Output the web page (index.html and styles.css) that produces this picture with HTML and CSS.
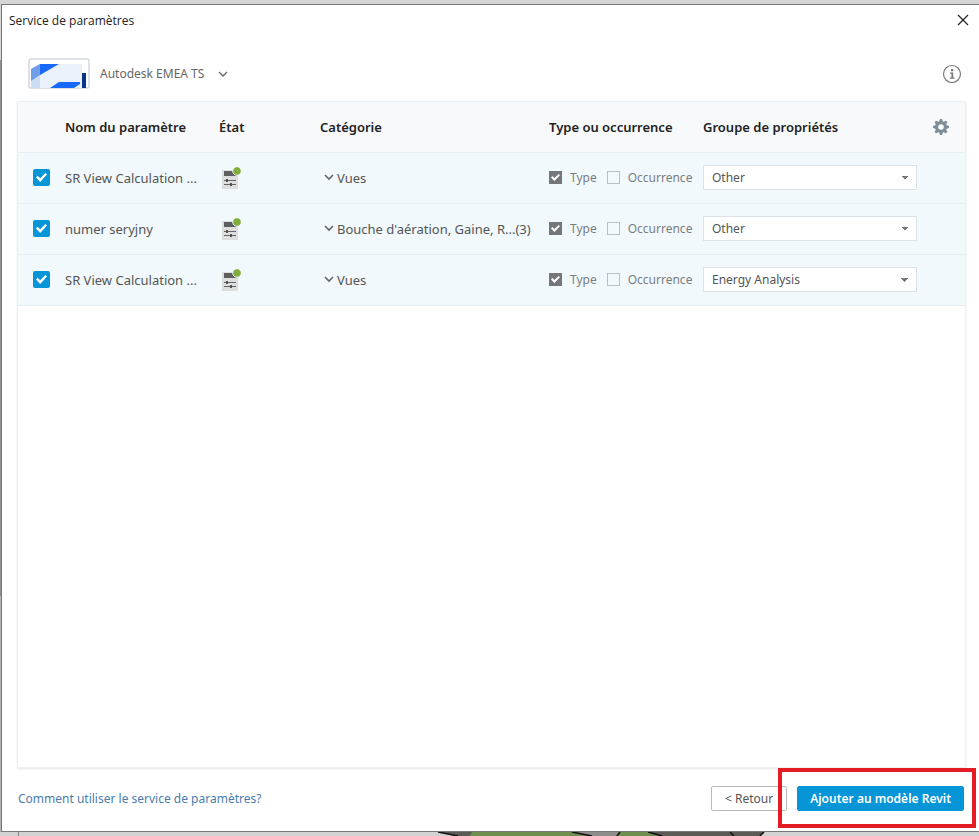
FILE: index.html
```html
<!DOCTYPE html>
<html lang="fr">

<head>
    <meta charset="UTF-8">
    <title>Service de paramètres</title>
    <link rel="stylesheet" href="styles.css">
</head>

<body>
    <div class="dialog">
        <header class="titlebar">
            <h1>Service de paramètres</h1>
            <button type="button" class="icon-btn" aria-label="Fermer">
                <svg width="12" height="12" viewBox="0 0 12 12"><path d="M1 1l10 10M11 1L1 11" stroke="#222" stroke-width="1.2" fill="none"/></svg>
            </button>
        </header>

        <div class="account-bar">
            <button type="button" class="account">
                <svg class="logo" width="62" height="31" viewBox="0 0 62 31">
                    <rect x="1" y="1" width="60" height="29" rx="2" fill="#fff" stroke="#d3d8df" stroke-width="1.5"/>
                    <path d="M12 6h42v24H12z" fill="#eaf1fb"/>
                    <path d="M3 11l9-5v24H3z" fill="#cddcf5"/>
                    <path d="M3 11l9-5v11l-9 6z" fill="#6f9fe8"/>
                    <path d="M12 6h19L12 17z" fill="#1769fa"/>
                    <path d="M31 24h21v2l-6 4H22z" fill="#1769fa"/>
                    <path d="M54 15h4v15h-4z" fill="#0b3489"/>
                </svg>
                <span>Autodesk EMEA TS</span>
                <svg class="account-arrow" width="10" height="6" viewBox="0 0 10 6"><path d="M1 1l4 4 4-4" stroke="#666" stroke-width="1.3" fill="none"/></svg>
            </button>
            <button type="button" class="icon-btn" aria-label="Informations">
                <svg width="20" height="20" viewBox="0 0 20 20">
                    <circle cx="10" cy="10" r="8.5" stroke="#777" stroke-width="1.2" fill="none"/>
                    <path d="M9 5h2.200v2.200H9zM8 8.500h3.200v5H12.500v1.200H7.800v-1.200h1.600v-3.800H8z" fill="#777"/>
                </svg>
            </button>
        </div>

        <main class="panel">
            <table class="params">
                <colgroup>
                    <col class="col-check">
                    <col class="col-name">
                    <col class="col-state">
                    <col class="col-category">
                    <col class="col-type">
                    <col class="col-group">
                    <col class="col-gear">
                </colgroup>
                <thead>
                    <tr>
                        <td></td>
                        <th>Nom du paramètre</th>
                        <th>État</th>
                        <th>Catégorie</th>
                        <th>Type ou occurrence</th>
                        <th>Groupe de propriétés</th>
                        <td>
                            <button type="button" class="icon-btn" aria-label="Paramètres du tableau">
                                <svg width="18" height="18" viewBox="0 0 18 18">
                                    <g fill="#7e8d96">
                                        <path id="tooth" d="M7 4L8 1h2l1 3v10l-1 3H8l-1-3z"/>
                                        <use href="#tooth" transform="rotate(45 9 9)"/>
                                        <use href="#tooth" transform="rotate(90 9 9)"/>
                                        <use href="#tooth" transform="rotate(135 9 9)"/>
                                        <circle cx="9" cy="9" r="5.800"/>
                                    </g>
                                    <circle cx="9" cy="9" r="2.800" fill="#f7f9fb"/>
                                </svg>
                            </button>
                        </td>
                    </tr>
                </thead>
                <tbody>
                    <tr>
                        <td><input type="checkbox" class="row-check" aria-label="Sélectionner la ligne 1" checked></td>
                        <td>SR View Calculation ...</td>
                        <td>
                            <svg class="state" width="22" height="24" viewBox="0 0 22 24">
                                <g id="state-icon">
                                    <path d="M3 4h16v19H3z" fill="#dedede"/>
                                    <path d="M5 5h13v5H5z" fill="#5d5f61"/>
                                    <path d="M5 14.500h12M5 18.500h12" stroke="#666" stroke-width="1.200"/>
                                    <path d="M8 13v3M12 17v3" stroke="#555" stroke-width="2"/>
                                    <circle cx="18" cy="5" r="4.300" fill="#7fae3d" stroke="#f1f9fc"/>
                                </g>
                            </svg>
                        </td>
                        <td>
                            <button type="button" class="category">
                                <svg width="10" height="7" viewBox="0 0 10 7"><path d="M1 1l4 4 4-4" stroke="#666" stroke-width="1.600" fill="none"/></svg>
                                <span>Vues</span>
                            </button>
                        </td>
                        <td>
                            <div class="kind">
                                <label><input type="checkbox" checked> Type</label>
                                <label><input type="checkbox"> Occurrence</label>
                            </div>
                        </td>
                        <td>
                            <select aria-label="Groupe de propriétés 1">
                                <option selected>Other</option>
                                <option>Energy Analysis</option>
                            </select>
                        </td>
                        <td></td>
                    </tr>
                    <tr>
                        <td><input type="checkbox" class="row-check" aria-label="Sélectionner la ligne 2" checked></td>
                        <td>numer seryjny</td>
                        <td><svg class="state" width="22" height="24" viewBox="0 0 22 24"><use href="#state-icon"/></svg></td>
                        <td>
                            <button type="button" class="category">
                                <svg width="10" height="7" viewBox="0 0 10 7"><path d="M1 1l4 4 4-4" stroke="#666" stroke-width="1.600" fill="none"/></svg>
                                <span>Bouche d'aération, Gaine, R...(3)</span>
                            </button>
                        </td>
                        <td>
                            <div class="kind">
                                <label><input type="checkbox" checked> Type</label>
                                <label><input type="checkbox"> Occurrence</label>
                            </div>
                        </td>
                        <td>
                            <select aria-label="Groupe de propriétés 2">
                                <option selected>Other</option>
                                <option>Energy Analysis</option>
                            </select>
                        </td>
                        <td></td>
                    </tr>
                    <tr>
                        <td><input type="checkbox" class="row-check" aria-label="Sélectionner la ligne 3" checked></td>
                        <td>SR View Calculation ...</td>
                        <td><svg class="state" width="22" height="24" viewBox="0 0 22 24"><use href="#state-icon"/></svg></td>
                        <td>
                            <button type="button" class="category">
                                <svg width="10" height="7" viewBox="0 0 10 7"><path d="M1 1l4 4 4-4" stroke="#666" stroke-width="1.600" fill="none"/></svg>
                                <span>Vues</span>
                            </button>
                        </td>
                        <td>
                            <div class="kind">
                                <label><input type="checkbox" checked> Type</label>
                                <label><input type="checkbox"> Occurrence</label>
                            </div>
                        </td>
                        <td>
                            <select aria-label="Groupe de propriétés 3">
                                <option>Other</option>
                                <option selected>Energy Analysis</option>
                            </select>
                        </td>
                        <td></td>
                    </tr>
                </tbody>
            </table>
        </main>

        <footer class="footer">
            <a href="#">Comment utiliser le service de paramètres?</a>
            <div class="actions">
                <button type="button" class="btn">&lt; Retour</button>
                <div class="highlighted">
                    <button type="button" class="btn btn-primary">Ajouter au modèle Revit</button>
                </div>
            </div>
        </footer>
    </div>

    <!-- strip of the model view under the dialog -->
    <svg class="model-view" viewBox="0 0 979 4" preserveAspectRatio="none">
        <path d="M0 0h979v4H0z" fill="#d2d2d2"/>
        <path d="M18 0h1v4h-1z" fill="#888"/>
        <path d="M438 0h326l-4 4H458z" fill="#5b5a55"/>
        <path d="M472 0h102l18 4H470z" fill="#6f8f4e"/>
        <path d="M574 0h46l-3 4h-25z" fill="#8d8c88"/>
        <path d="M620 0h28l14 4h-45z" fill="#6f8f4e"/>
        <path d="M438 0l20 4M572 0l20 4M620 0l-3 4M648 0l14 4M730 0l4 4M764 0l-4 4" stroke="#111" stroke-width="1.500"/>
    </svg>
</body>

</html>
```

FILE: styles.css
```css
* {
    box-sizing: border-box;
}

body {
    display: flex;
    flex-direction: column;
    min-height: 100vh;
    margin: 0;
    padding-top: 4px;
    background: linear-gradient(#d6d6d6 60px, #8f8f8f 60px, #8f8f8f 596px, #b5b5b5 596px);
    font-family: "Noto Sans", sans-serif;
    font-size: 13px;
    color: #555;
}

button,
select {
    font: inherit;
    color: inherit;
}

.dialog {
    flex: 1;
    display: flex;
    flex-direction: column;
    margin-left: 1px;
    padding: 0 13px 0 15px;
    border: 1px solid #777;
    border-right: none;
    background: #fff;
}

.titlebar {
    display: flex;
    justify-content: space-between;
    align-items: center;
    height: 30px;
    margin: 0 -3px 0 -8px;
}

h1 {
    margin: 0;
    font-family: "Open Sans", sans-serif;
    font-size: 12px;
    font-weight: normal;
    color: #222;
}

.icon-btn {
    display: flex;
    padding: 0;
    border: none;
    background: none;
    cursor: pointer;
}

.account-bar {
    display: flex;
    justify-content: space-between;
    align-items: center;
    height: 66px;
    padding: 11px 4px 0 11px;
}

.account {
    display: flex;
    align-items: center;
    gap: 10px;
    padding: 0;
    border: none;
    background: none;
    font-size: 12px;
    color: #666;
}

.account-arrow {
    margin-left: 4px;
}

.panel {
    flex: 1;
    border: 1px solid #edf0f2;
    box-shadow: 0 1px 2px rgba(0, 0, 0, 0.1);
}

.params {
    width: 100%;
    border-collapse: collapse;
    table-layout: fixed;
}

.params th,
.params td {
    height: 51px;
    padding: 0;
    text-align: left;
    white-space: nowrap;
    border-bottom: 1px solid #e6eef2;
}

.params thead th,
.params thead td {
    height: 50px;
}

.params th {
    font-weight: 600;
    color: #222;
}

.params thead {
    background: #f7f9fb;
}

.params tbody {
    background: #f1f9fc;
}

.col-check {
    width: 47px;
}

.col-name,
.col-type {
    width: 154px;
}

.col-state {
    width: 101px;
}

.col-group {
    width: 229px;
}

.col-gear {
    width: 33px;
}

.state {
    display: block;
}

input[type="checkbox"] {
    appearance: none;
    display: grid;
    place-items: center;
    width: 13px;
    height: 13px;
    margin: 0;
    border: 1px solid #b9c0c4;
}

input[type="checkbox"]:checked {
    border: none;
    background: #75787b;
}

/* tick mark */
input[type="checkbox"]:checked::before {
    content: "";
    width: 9px;
    height: 7px;
    background: #fff;
    clip-path: polygon(0 50%, 15% 30%, 38% 58%, 85% 0, 100% 18%, 38% 100%);
}

input.row-check {
    width: 17px;
    height: 17px;
    margin-left: 15px;
    border-radius: 2px;
}

input.row-check:checked {
    background: #0696d7;
}

input.row-check:checked::before {
    width: 11px;
    height: 9px;
}

.category {
    display: flex;
    align-items: center;
    gap: 3px;
    padding: 0 0 0 4px;
    border: none;
    background: none;
}

.kind {
    display: flex;
    gap: 10px;
    font-size: 12px;
    color: #7a7d80;
}

.kind label {
    display: flex;
    align-items: center;
    gap: 8px;
}

select {
    appearance: none;
    display: block;
    width: 214px;
    height: 25px;
    padding: 0 8px;
    border: 1px solid #dce3e6;
    border-radius: 0;
    background: linear-gradient(to bottom left, #777 50%, transparent 50%) right 11px center / 4px 4px no-repeat,
        linear-gradient(to bottom right, #777 50%, transparent 50%) right 7px center / 4px 4px no-repeat,
        #fff;
    font-size: 12px;
}

.footer {
    display: flex;
    justify-content: space-between;
    align-items: center;
    height: 63px;
    padding: 0 2px 2px 1px;
    font-size: 12px;
}

.footer a {
    color: #4a7dad;
    text-decoration: none;
}

.actions {
    display: flex;
    gap: 10px;
}

.btn {
    height: 25px;
    padding: 0 13px;
    border: 1px solid #bbb;
    border-radius: 2px;
    background: #fff;
    cursor: pointer;
}

.btn-primary {
    padding: 0 12px;
    border-color: #0696d7;
    background: #0696d7;
    color: #fff;
    font-weight: 600;
}

.highlighted {
    position: relative;
}

.highlighted::after {
    content: "";
    position: absolute;
    inset: -18px -12px -17px -19px;
    border: 4px solid #e51c23;
    pointer-events: none;
}

.model-view {
    display: block;
    width: 100%;
    height: 4px;
}
```
